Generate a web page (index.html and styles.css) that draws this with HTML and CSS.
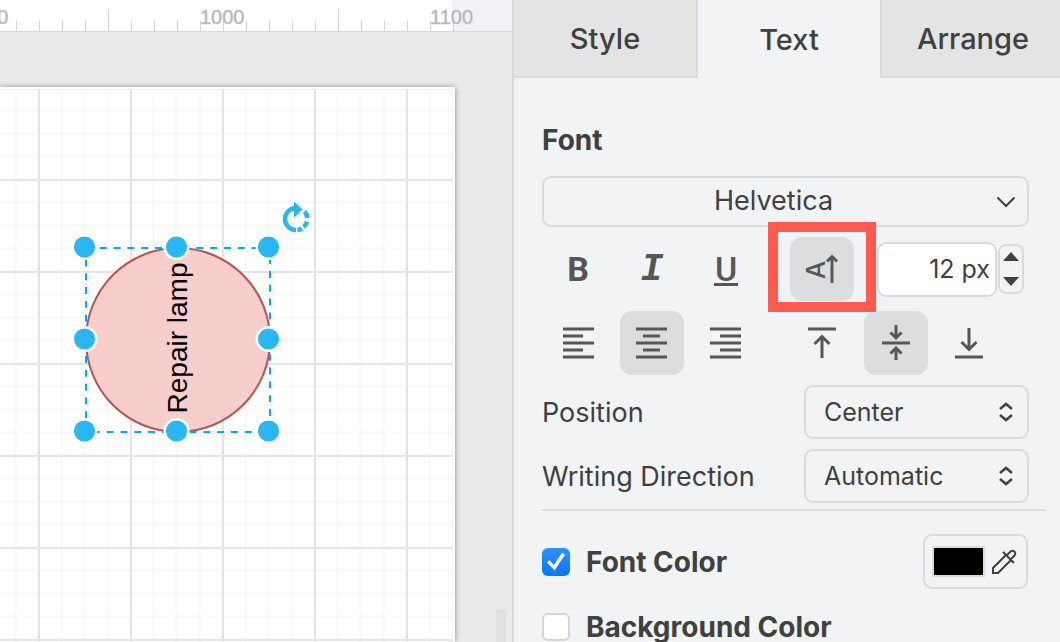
FILE: index.html
```html
<!DOCTYPE html>
<html lang="en">
<head>
    <meta charset="UTF-8">
    <meta name="viewport" content="width=device-width, initial-scale=1.0">
    <title>Diagram Editor</title>
    <link rel="stylesheet" href="styles.css">
</head>
<body>
    <main class="editor">
        <div class="ruler">
            <svg width="512" height="31">
                <defs>
                    <pattern id="ticks" x="16" width="23" height="31" patternUnits="userSpaceOnUse">
                        <rect y="21" width="1" height="10" fill="#d3d5da"/>
                    </pattern>
                </defs>
                <rect width="452" height="31" fill="#fff"/>
                <rect width="454" height="31" fill="url(#ticks)"/>
                <path d="M108.5 9V31M338.5 9V31" stroke="#d3d5da"/>
                <text x="-25" y="24">900</text>
                <text x="200" y="24">1000</text>
                <text x="430" y="24">1100</text>
            </svg>
        </div>
        <div class="canvas">
            <div class="paper">
                <div class="grid">
                    <svg class="diagram" width="340" height="360">
                        <circle cx="178" cy="251" r="92" fill="#f8cecc" stroke="#b85450" stroke-width="2"/>
                        <text class="shape-label" transform="translate(187 249) rotate(-90)" text-anchor="middle">Repair lamp</text>
                        <rect x="86" y="159" width="184" height="184" fill="none" stroke="#00a8ff" stroke-width="2" stroke-dasharray="6.9 6.9"/>
                        <g fill="#29b6f2" stroke="#fff" stroke-width="2.5">
                            <circle cx="84.5" cy="158" r="11.8"/>
                            <circle cx="176.5" cy="158" r="11.8"/>
                            <circle cx="268.5" cy="158" r="11.8"/>
                            <circle cx="84.5" cy="250" r="11.8"/>
                            <circle cx="268.5" cy="250" r="11.8"/>
                            <circle cx="84.5" cy="342" r="11.8"/>
                            <circle cx="176.5" cy="342" r="11.8"/>
                            <circle cx="268.5" cy="342" r="11.8"/>
                        </g>
                        <!-- rotate handle -->
                        <g fill="none" stroke="#29b6f2" stroke-width="4.5">
                            <path d="M296 141A11 11 0 0 1 296 119"/>
                            <path d="M297.5 141A11 11 0 0 0 302 139.5M303.5 138A11 11 0 0 0 307 132.5M307.3 129A11 11 0 0 0 304.5 122.5"/>
                            <path d="M294 112.5L302.5 120.5L294 128.5Z" fill="#29b6f2" stroke="none"/>
                        </g>
                    </svg>
                </div>
            </div>
            <div class="scroll-thumb"></div>
        </div>
    </main>
    <aside class="panel">
        <nav class="tabs">
            <button class="tab">Style</button>
            <button class="tab active">Text</button>
            <button class="tab">Arrange</button>
        </nav>
        <div class="panel-body">
            <section class="font-section">
                <h2>Font</h2>
                <div class="select-wrap">
                    <select class="font-family" aria-label="Font"><option>Helvetica</option></select>
                    <svg class="chevron" width="20" height="12"><path d="M1.5 1.5L10 10L18.5 1.5"/></svg>
                </div>
                <div class="tool-row">
                    <button class="tool bold" aria-label="Bold">B</button>
                    <button class="tool italic" aria-label="Italic">I</button>
                    <button class="tool underline" aria-label="Underline"><span>U</span></button>
                    <div class="highlight">
                        <button class="tool active" aria-label="Vertical">
                            <svg width="64" height="64">
                                <text class="icon-text" transform="translate(35 33) rotate(-90)" text-anchor="middle">A</text>
                                <path d="M42 46V20" stroke-width="3"/>
                                <path d="M37 24.5L42 19.5L47 24.5"/>
                            </svg>
                        </button>
                    </div>
                    <div class="size-field">
                        <input type="text" value="12 px" aria-label="Font size">
                        <div class="spinner">
                            <button aria-label="Increase"><svg width="16" height="9"><path d="M0 9L8 0L16 9Z"/></svg></button>
                            <button aria-label="Decrease"><svg width="16" height="9"><path d="M0 0L8 9L16 0Z"/></svg></button>
                        </div>
                    </div>
                </div>
                <div class="tool-row">
                    <button class="tool" aria-label="Left"><svg width="64" height="64"><path d="M17 18H48M17 25H37M17 32H48M17 39H37M17 46H48"/></svg></button>
                    <button class="tool active" aria-label="Center"><svg width="64" height="64"><path d="M16 18H47M23 25H40M16 32H47M23 39H40M16 46H47"/></svg></button>
                    <button class="tool" aria-label="Right"><svg width="64" height="64"><path d="M16 18H47M26 25H47M16 32H47M26 39H47M16 46H47"/></svg></button>
                    <button class="tool valign-top" aria-label="Top"><svg width="64" height="64"><path d="M18 18H46M32 47V25M24.5 33L32 25.5L39.5 33"/></svg></button>
                    <button class="tool active" aria-label="Middle"><svg width="64" height="64"><path d="M18 32H46M32 14V26M26.5 21.5L32 27L37.5 21.5M32 49V38M26.5 42.5L32 37L37.5 42.5"/></svg></button>
                    <button class="tool" aria-label="Bottom"><svg width="64" height="64"><path d="M17 46H45M31 17V39M23.5 31L31 38.5L38.5 31"/></svg></button>
                </div>
                <div class="option-row">
                    <label for="position">Position</label>
                    <div class="select-wrap">
                        <select id="position"><option>Center</option></select>
                        <svg class="updown" width="16" height="20"><path d="M2 7L8 2L14 7M2 13L8 18L14 13"/></svg>
                    </div>
                </div>
                <div class="option-row">
                    <label for="direction">Writing Direction</label>
                    <div class="select-wrap">
                        <select id="direction"><option>Automatic</option></select>
                        <svg class="updown" width="16" height="20"><path d="M2 7L8 2L14 7M2 13L8 18L14 13"/></svg>
                    </div>
                </div>
            </section>
            <section class="color-section">
                <div class="color-row">
                    <label><input type="checkbox" checked> Font Color</label>
                    <button class="color-button" aria-label="Choose font color">
                        <span class="swatch"></span>
                        <svg width="26" height="26" viewBox="0 0 26 26">
                            <path d="M2 24V19L15 6L20 11L7 24ZM12 3L23 14M15.5 6.5L19.5 2.5Q21.5 1 23.5 2.5Q25 4.5 23.5 6.5L19.5 10.5"/>
                        </svg>
                    </button>
                </div>
                <div class="color-row">
                    <label><input type="checkbox"> Background Color</label>
                </div>
            </section>
        </div>
    </aside>
</body>
</html>
```
FILE: styles.css
```css
* {
    box-sizing: border-box;
}

body {
    margin: 0;
    height: 100vh;
    display: flex;
    overflow: hidden;
    font-family: Inter, "Liberation Sans", sans-serif;
    font-size: 27px;
    color: #3f4040;
    background-color: #f1f3f5;
}

button, input, select {
    font: inherit;
    color: inherit;
    margin: 0;
}

button {
    padding: 0;
    border: none;
    background: none;
}

svg {
    display: block;
}

/* Canvas side */
.editor {
    flex: 1;
    min-width: 0;
    display: flex;
    flex-direction: column;
}

.ruler {
    border-bottom: 1px solid #d8d9dc;
    background-color: #f0f2f5;
    overflow: hidden;
}

.ruler text {
    font-family: "Liberation Sans", Arial, sans-serif;
    font-size: 20px;
    fill: #b4b4b4;
    stroke: #c4c4c4;
    stroke-width: 0.5;
}

.canvas {
    flex: 1;
    min-height: 0;
    display: flex;
    position: relative;
    padding: 55px 57px 0 0;
    background-color: #ebebeb;
    overflow: hidden;
}

.paper {
    flex: 1;
    padding: 2px 2px 0 0;
    background-color: #fff;
    box-shadow: 0 0 6px rgba(0, 0, 0, 0.4);
}

.grid {
    height: 100%;
    border-top: 1px solid #eee;
    background-image:
        linear-gradient(90deg, #e5e5e5 2px, transparent 2px),
        linear-gradient(#e5e5e5 2px, transparent 2px),
        linear-gradient(90deg, rgba(0, 0, 0, 0.02) 3px, transparent 3px),
        linear-gradient(rgba(0, 0, 0, 0.02) 3px, transparent 3px);
    background-size: 92px 92px, 92px 92px, 23px 23px, 23px 23px;
    background-position: 38px 0, 0 89px, 14px 0, 0 19px;
}

.diagram {
    margin-top: -1px;
}

.shape-label {
    font-family: "Liberation Sans", Helvetica, sans-serif;
    font-size: 28px;
    fill: #000;
}

.scroll-thumb {
    position: absolute;
    right: 6px;
    bottom: 0;
    width: 10px;
    height: 33px;
    border-radius: 3px 3px 0 0;
    background-color: #e1e1e1;
}

/* Format panel */
.panel {
    flex: 0 0 548px;
    min-width: 0;
    border-left: 2px solid #d9dadb;
}

.tabs {
    display: flex;
    height: 78px;
    margin-right: -4px;
}

.tab {
    flex: 1;
    font-size: 29px;
    font-weight: 500;
    background-color: #e4e4e4;
    border: 0 solid #d9dadb;
    border-bottom-width: 2px;
}

.tab:first-child {
    border-right-width: 2px;
}

.tab:last-child {
    border-left-width: 2px;
}

.tab.active {
    background: none;
    border: none;
}

.panel-body {
    padding: 46px 14px 0 28px;
}

.font-section {
    display: flex;
    flex-direction: column;
    gap: 10px;
    padding: 0 17px 6px 0;
    border-bottom: 2px solid #dcddde;
}

h2 {
    margin: 0 0 10px;
    font-size: 28px;
    line-height: 32px;
    font-weight: 700;
}

.select-wrap {
    position: relative;
}

select {
    display: block;
    width: 100%;
    height: 54px;
    padding: 0 18px;
    font-size: 25px;
    appearance: none;
    background: none;
    border: 2px solid #d9dadb;
    border-radius: 9px;
}

.font-family {
    height: 51px;
    padding: 0 42px 2px 18px;
    font-size: 27px;
    text-align-last: center;
}

.chevron, .updown {
    position: absolute;
    right: 13px;
    top: 50%;
    transform: translateY(-50%);
    fill: none;
    stroke: #3f4040;
    stroke-width: 2;
    pointer-events: none;
}

.updown {
    right: 15px;
    stroke-width: 2.5;
}

.tool-row {
    display: flex;
    align-items: center;
    gap: 10px;
    padding-left: 4px;
}

.tool {
    flex: none;
    width: 64px;
    height: 64px;
    border-radius: 12px;
    font-family: Roboto, sans-serif;
    font-size: 34px;
    color: #555756;
}

.tool.active {
    background-color: #dcdddf;
}

.tool svg {
    fill: none;
    stroke: #555756;
    stroke-width: 3;
}

.tool .icon-text {
    font-family: Inter, sans-serif;
    font-size: 26px;
    font-weight: 500;
    fill: #555756;
    stroke: none;
}

.bold {
    font-weight: 700;
}

.italic {
    font-family: "Liberation Mono", monospace;
    font-size: 38px;
    font-weight: 700;
    font-style: italic;
}

.underline {
    font-weight: 500;
}

.underline span {
    display: inline-block;
    width: 24px;
    line-height: 27px;
    border-bottom: 3px solid #555756;
}

.highlight {
    display: flex;
    position: relative;
    margin-left: 22px;
}

.highlight::after {
    content: "";
    position: absolute;
    inset: -15px -22px -11px;
    border: 10px solid #ff5a4d;
    pointer-events: none;
}

.valign-top {
    margin-left: 22px;
}

.size-field {
    display: flex;
    align-items: center;
    flex: 1;
    gap: 1px;
    min-width: 0;
    margin: 0 5px 0 13px;
}

.size-field input {
    flex: 1;
    min-width: 0;
    height: 55px;
    padding: 0 5px;
    font-size: 25px;
    text-align: right;
    background-color: #fff;
    border: 2px solid #d9dadb;
    border-radius: 9px;
}

.spinner {
    display: flex;
    flex-direction: column;
    justify-content: space-between;
    align-items: center;
    width: 26px;
    height: 50px;
    padding: 6px 0;
    border: 2px solid #d9dadb;
    border-radius: 8px;
}

.spinner svg {
    fill: #3f4040;
}

.option-row {
    display: flex;
    align-items: center;
    justify-content: space-between;
}

.option-row .select-wrap {
    width: 225px;
}

.color-section {
    display: flex;
    flex-direction: column;
    gap: 10px;
    padding: 23px 18px 0 0;
}

.color-row {
    display: flex;
    align-items: center;
    justify-content: space-between;
    height: 55px;
    font-size: 28px;
    font-weight: 700;
}

.color-row label {
    display: flex;
    align-items: center;
    gap: 16px;
}

.color-row input {
    appearance: none;
    width: 28px;
    height: 28px;
    border: 2px solid #d4d5d6;
    border-radius: 6px;
    background-color: #fff;
}

.color-row input:checked {
    display: grid;
    place-items: center;
    border: none;
    background: linear-gradient(#2e90ff, #0479fd);
}

.color-row input:checked::before {
    content: "";
    width: 18px;
    height: 18px;
    background-color: #fff;
    clip-path: polygon(0 56%, 14% 42%, 38% 70%, 84% 0, 100% 12%, 42% 100%);
}

.color-button {
    display: flex;
    align-items: center;
    gap: 6px;
    width: 105px;
    height: 55px;
    padding: 0 7px;
    border: 2px solid #d9dadb;
    border-radius: 9px;
}

.swatch {
    width: 53px;
    height: 31px;
    border: 2px solid #d9dadb;
    background-color: #000;
}

.color-button svg {
    fill: none;
    stroke: #3f4040;
    stroke-width: 2;
}
```
